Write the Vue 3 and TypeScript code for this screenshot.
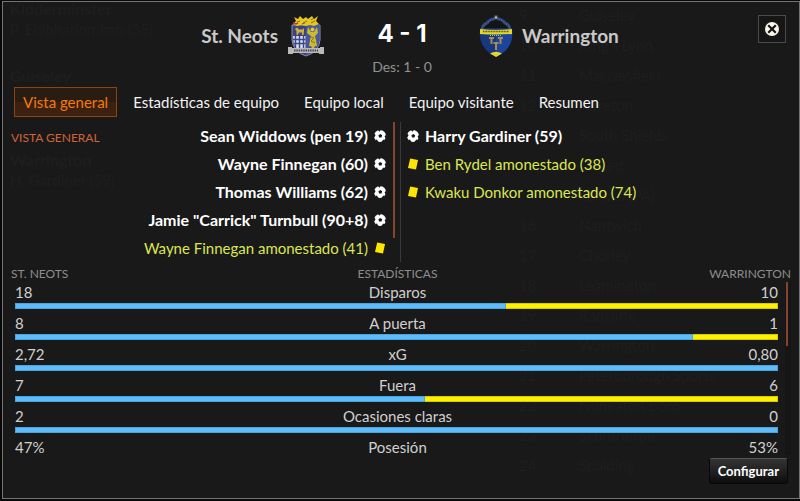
<script setup lang="ts">
import { ref } from 'vue'

interface MatchEvent { kind: 'goal' | 'card'; text: string }
interface Stat { home: string; label: string; away: string; share?: number }

const tabs = ['Vista general', 'Estadísticas de equipo', 'Equipo local', 'Equipo visitante', 'Resumen']
const active = ref(0)

const homeEvents: MatchEvent[] = [
  { kind: 'goal', text: 'Sean Widdows (pen 19)' },
  { kind: 'goal', text: 'Wayne Finnegan (60)' },
  { kind: 'goal', text: 'Thomas Williams (62)' },
  { kind: 'goal', text: 'Jamie "Carrick" Turnbull (90+8)' },
  { kind: 'card', text: 'Wayne Finnegan amonestado (41)' },
]
const awayEvents: MatchEvent[] = [
  { kind: 'goal', text: 'Harry Gardiner (59)' },
  { kind: 'card', text: 'Ben Rydel amonestado (38)' },
  { kind: 'card', text: 'Kwaku Donkor amonestado (74)' },
]
// share is the home side's part of the bar, in percent
const stats: Stat[] = [
  { home: '18', label: 'Disparos', away: '10', share: 64.3 },
  { home: '8', label: 'A puerta', away: '1', share: 88.9 },
  { home: '2,72', label: 'xG', away: '0,80', share: 100 },
  { home: '7', label: 'Fuera', away: '6', share: 53.8 },
  { home: '2', label: 'Ocasiones claras', away: '0', share: 100 },
  { home: '47%', label: 'Posesión', away: '53%' },
]

// the dimmed league screen that shows faintly through the dialog
const results = [
  { club: 'Kidderminster', scorer: 'P. Ehibhatiomhan (35)' },
  { club: 'Guiseley', scorer: '' },
  { club: 'Warrington', scorer: 'H. Gardiner (59)' },
]
const league = [
  { pos: '9', club: 'Guiseley' },
  { pos: '10', club: "King's Lynn" },
  { pos: '11', club: 'Macclesfield' },
  { pos: '12', club: 'Alfreton' },
  { pos: '', club: 'South Shields' },
  { pos: '', club: 'United' },
  { pos: '', club: 'Telford (PA)' },
  { pos: '16', club: 'Nantwich' },
  { pos: '17', club: 'Chorley' },
  { pos: '18', club: 'Leamington' },
  { pos: '19', club: 'Radcliffe' },
  { pos: '20', club: 'Warrington' },
  { pos: '21', club: 'Peterborough Sports' },
  { pos: '22', club: 'Nuneaton Boro' },
  { pos: '23', club: 'Scunthorpe' },
  { pos: '24', club: 'Spalding' },
]
</script>

<template>
  <main class="panel">
    <div class="behind" aria-hidden="true">
      <div class="behind-results">
        <div v-for="r in results" :key="r.club">
          <b>{{ r.club }}</b>
          <span>{{ r.scorer }}</span>
        </div>
      </div>
      <div class="behind-league">
        <div v-for="row in league" :key="row.club">
          <span>{{ row.pos }}</span>
          <span>{{ row.club }}</span>
        </div>
      </div>
    </div>

    <header class="match">
      <div class="team home">
        <h2>St. Neots</h2>
        <svg class="crest" width="38" height="42" viewBox="0 0 38 42" aria-hidden="true">
          <path d="M5 10V25Q6 37 19 41Q32 37 33 25V10Z" fill="#3a4580" stroke="#8b8fa8" stroke-width="1" />
          <path d="M19 10V40Q31 37 32.500 25V10Z" fill="#4a569c" />
          <path d="M6 21H18.500V33H9Q6 29 6 21Z" fill="#d9deec" />
          <path d="M6 24.500H18.500M7 28.500H18.500M8.500 21V33M12.500 21V33M16.500 21V33" stroke="#3a4788" stroke-width="1.400" fill="none" />
          <path d="M8 14L10 12.500L12 14.500H15.500L17 13V16L16.500 20H15V17.500H12L10.500 20H9.500V16Z" fill="#cfb23a" />
          <circle cx="25.500" cy="14.500" r="2" fill="#e0cb35" />
          <path d="M21 12L24 17H27L30 12L31 18L28 21L29 25L30 31H28L27 33H25L24 31H22L23 25L24 21L20 18Z" fill="#cdbb2e" />
          <path d="M24 22L27 23L24 26L28 28" stroke="#85772e" fill="none" />
          <path d="M6 9L9 6L7 2L11 4L13 1L16 4L19 2L21 4L25 1L27 4L31 1L29 6L32 9L27 11L23 10L19 11L14 10L10 11Z" fill="#e6c822" />
          <path d="M10 7L13 6M16 8L20 6M24 8L28 6M24 5L27 3M15 9L18 8" stroke="#8f651e" stroke-width="1" fill="none" />
          <path d="M6 8L9 9L11 8" stroke="#c03a28" stroke-width="1.500" fill="none" />
          <path d="M1 32H5V33H33V32H37V39H32V38H6V39H1Z" fill="#b9b9b9" />
          <path d="M7 35.500H31" stroke="#4a474d" stroke-width="2" stroke-dasharray="1.500 .8" />
        </svg>
      </div>
      <div class="result">
        <strong>4 - 1</strong>
        <span>Des: 1 - 0</span>
      </div>
      <div class="team away">
        <svg class="crest" width="34" height="42" viewBox="0 0 34 42" aria-hidden="true">
          <path d="M3 15Q3 10 8 8Q11 4 15 4L17 1L19 4Q23 4 26 8Q31 10 31 15Z" fill="#121417" stroke="#2d4680" stroke-width="3" />
          <path d="M3 14Q4 10 8 8Q12 4 17 3Q22 4 26 8Q30 10 31 14" fill="none" stroke="#7189b4" stroke-width="1" stroke-dasharray="1 2" />
          <circle cx="17" cy="2.500" r="1.200" fill="#c5c66a" />
          <path d="M1 14Q17 16 33 14Q35 31 22 39L17 42L12 39Q-1 31 1 14Z" fill="#17387f" />
          <path d="M17 15Q27 15 33 14Q35 31 22 39L17 42Z" fill="#1c449b" />
          <path d="M1 14Q17 16 33 14V19Q17 20 1 19Z" fill="#e2d82a" />
          <path d="M4 16.500H30" stroke="#514e38" stroke-width="1.500" stroke-dasharray="1 .6" fill="none" />
          <path d="M11 20.500H23" stroke="#aab1c9" stroke-width="1" stroke-dasharray="1 1" />
          <path d="M10 22H15V24H13.500V29H11.500V24H10ZM19 22H24V24H22.500V29H20.500V24H19ZM14.500 27H19.500V29H18V35H16V29H14.500Z" fill="#a68c4e" />
          <path d="M11 38.500Q17 35 23 38.500L17 42Z" fill="#e2d82a" />
        </svg>
        <h2>Warrington</h2>
      </div>
      <button class="close" type="button" aria-label="Cerrar">
        <svg width="14" height="14" viewBox="0 0 14 14" aria-hidden="true">
          <circle cx="7" cy="7" r="7" fill="#fbf6ec" />
          <path d="M3.200 3.200L10.800 10.800M10.800 3.200L3.200 10.800" stroke="#151515" stroke-width="2.200" />
        </svg>
      </button>
    </header>

    <nav class="tabs">
      <button
        v-for="(tab, i) in tabs"
        :key="tab"
        type="button"
        :class="{ active: i === active }"
        @click="active = i"
      >{{ tab }}</button>
    </nav>

    <section class="events">
      <div class="side home-side">
        <h3>VISTA GENERAL</h3>
        <ul>
          <li v-for="e in homeEvents" :key="e.text" :class="e.kind">
            <span>{{ e.text }}</span>
            <svg width="12" height="12" viewBox="0 0 12 12" aria-hidden="true">
              <template v-if="e.kind === 'goal'">
                <circle cx="6" cy="6" r="6" fill="#fff" />
                <path d="M6.300 3.900L8.200 5.300L7.500 7.500H5.100L4.400 5.300ZM4 0H6.800L5.400 1.800ZM0 3.500L1.600 5L.6 7H0ZM12 5L10.600 6.200L11.500 8.200H12ZM1.400 10.800L2.900 9.200L4.200 12H2ZM10.800 10.600L9.200 9.400L7.600 12H10Z" fill="#191919" />
              </template>
              <path v-else d="M3.200 .5L11 2L9 11.500L1 10Z" fill="#ffe600" />
            </svg>
          </li>
        </ul>
        <i class="scroll"></i>
      </div>
      <div class="side away-side">
        <ul>
          <li v-for="e in awayEvents" :key="e.text" :class="e.kind">
            <svg width="12" height="12" viewBox="0 0 12 12" aria-hidden="true">
              <template v-if="e.kind === 'goal'">
                <circle cx="6" cy="6" r="6" fill="#fff" />
                <path d="M6.300 3.900L8.200 5.300L7.500 7.500H5.100L4.400 5.300ZM4 0H6.800L5.400 1.800ZM0 3.500L1.600 5L.6 7H0ZM12 5L10.600 6.200L11.500 8.200H12ZM1.400 10.800L2.900 9.200L4.200 12H2ZM10.800 10.600L9.200 9.400L7.600 12H10Z" fill="#191919" />
              </template>
              <path v-else d="M3.200 .5L11 2L9 11.500L1 10Z" fill="#ffe600" />
            </svg>
            <span>{{ e.text }}</span>
          </li>
        </ul>
      </div>
    </section>

    <section class="stats">
      <div class="viewport">
        <table>
          <thead>
            <tr>
              <th scope="col">ST. NEOTS</th>
              <th scope="col">ESTADÍSTICAS</th>
              <th scope="col">WARRINGTON</th>
            </tr>
          </thead>
          <tbody v-for="s in stats" :key="s.label">
            <tr>
              <td>{{ s.home }}</td>
              <th scope="row">{{ s.label }}</th>
              <td>{{ s.away }}</td>
            </tr>
            <tr v-if="s.share !== undefined" class="bar-row">
              <td colspan="3">
                <div class="bar"><i :style="{ width: s.share + '%' }"></i></div>
              </td>
            </tr>
          </tbody>
        </table>
      </div>
      <i class="track"></i>
    </section>

    <footer>
      <button type="button">Configurar</button>
    </footer>
  </main>
</template>

<style>
body { background: #080808; }
</style>

<style scoped>
* { box-sizing: border-box; }
.panel {
  position: relative;
  z-index: 0;
  display: flex;
  flex-direction: column;
  height: calc(100vh - 3px);
  margin: 1px 0 0 2px;
  padding-bottom: 14px;
  border: 1px solid #747474;
  background: #191919;
  color: #d0d0d0;
  font: 15px/20px Lato, "Open Sans", sans-serif;
}
.behind {
  position: absolute;
  inset: 0;
  z-index: -1;
  display: flex;
  justify-content: space-between;
  overflow: hidden;
  color: #1e1e1e;
}
.behind-results {
  display: grid;
  grid-template-rows: 67px 84px 84px;
  align-content: start;
  padding-left: 7px;
}
.behind-results div { display: flex; flex-direction: column; margin-top: -3px; }
.behind-results b { font-size: 16px; }
.behind-league { width: 280px; margin-top: -2px; }
.behind-league div { display: grid; grid-template-columns: 60px 1fr; height: 30px; align-items: center; }
h2, h3, ul { margin: 0; padding: 0; font-weight: normal; }
ul { list-style: none; }
button { font: inherit; cursor: pointer; }
.match {
  position: relative;
  display: grid;
  grid-template-columns: 1fr 154px 1fr;
  height: 85px;
  padding-left: 2px;
  flex: none;
}
.team { display: flex; align-items: center; gap: 9px; height: 68px; }
.home { justify-content: flex-end; }
.team h2 { color: #c9c9c9; font-size: 19px; font-weight: bold; }
.result { display: flex; flex-direction: column; align-items: center; padding-top: 16px; }
.result strong { color: #fff; font: bold 24px/32px Inter, Lato, sans-serif; }
.result span { margin-top: 7px; color: #929292; font-size: 14px; }
.close {
  position: absolute;
  top: 13px;
  right: 13px;
  display: grid;
  place-items: center;
  width: 28px;
  height: 28px;
  padding: 0;
  border: 1px solid #4b4b4b;
  background: #161616;
}
.tabs { display: flex; flex: none; gap: 7px; padding-left: 11px; }
.tabs button {
  height: 30px;
  padding: 0 8px;
  border: 1px solid transparent;
  background: none;
  color: #f2f2f2;
}
.tabs .active {
  border-color: #8a4510;
  background: linear-gradient(#2b1c13 50%, #3c2110 50%);
  color: #f27a0c;
}
.events { display: grid; grid-template-columns: 1fr 1fr; flex: none; margin-top: 5px; }
.side { display: flex; min-height: 140px; }
.home-side { padding: 0 6px 0 8px; }
h3 { margin-top: 6px; color: #d2633a; font-size: 12px; }
.home-side ul { flex: 1; }
.home-side li { justify-content: flex-end; }
.away-side { margin-left: -1px; padding-left: 6px; border-left: 1px solid #3a3a3a; }
li { display: flex; align-items: center; gap: 6px; height: 28px; }
.goal { color: #fff; font-size: 16px; font-weight: bold; }
.card { color: #dbe653; }
.scroll { width: 2px; height: 116px; margin-left: 7px; background: #84452b; }
.stats { position: relative; flex: 1 1 0; min-height: 0; margin: 4px 8px 0; }
.viewport { height: 100%; overflow: hidden; }
table { width: 100%; border-collapse: collapse; table-layout: fixed; }
th, td { padding: 0; font-weight: normal; text-align: center; }
th:nth-child(2) { padding-right: 7px; }
th:first-child, td:first-child { text-align: left; }
th:last-child, td:last-child { text-align: right; }
thead th { height: 16px; color: #8d8d8d; font-size: 12px; line-height: 16px; }
tbody td, tbody th { height: 21px; line-height: 20px; vertical-align: top; }
td:first-child { padding-left: 4px; }
td:last-child { padding-right: 13px; }
.bar-row td { height: 10px; padding-bottom: 4px; line-height: 0; }
.bar {
  height: 6px;
  background: #fff000;
  box-shadow: inset 0 0 0 1px #d4ca00;
}
.bar i { display: block; height: 6px; background: #5fbcfa; box-shadow: inset 0 0 0 1px #4aa5df; }
.track {
  position: absolute;
  top: 16px;
  right: 0;
  bottom: 0;
  width: 6px;
  background: linear-gradient(#84452b, #84452b) 1px 0 / 2px 64px no-repeat #151515;
}
footer { display: flex; flex: none; justify-content: flex-end; padding: 3px 11px 0; }
footer button {
  height: 26px;
  padding: 0 8px;
  border: 1px solid #080808;
  border-top-color: #555;
  border-radius: 3px;
  background: linear-gradient(#343434, #0d0d0d);
  color: #fff;
  font-size: 13px;
  font-weight: bold;
}
</style>
